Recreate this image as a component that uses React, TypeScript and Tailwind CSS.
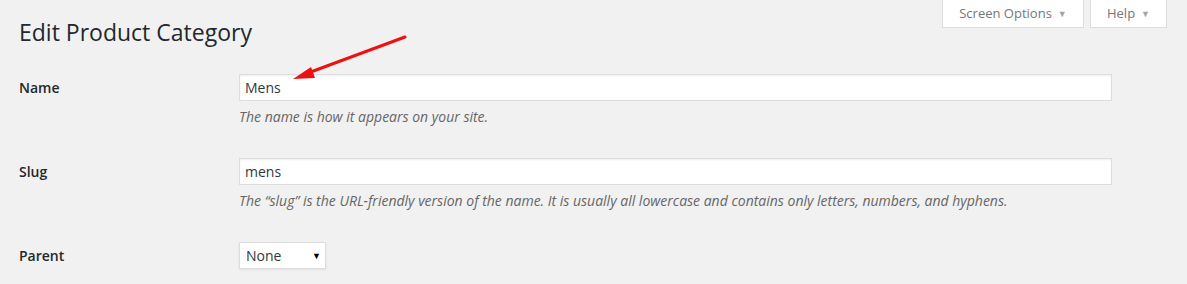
import React from "react";

const rows = [
  { label: "Name", value: "Mens", help: "The name is how it appears on your site." },
  {
    label: "Slug",
    value: "mens",
    help: "The \u201cslug\u201d is the URL-friendly version of the name. It is usually all lowercase and contains only letters, numbers, and hyphens.",
  },
];

function TabButton({ label, className }: { label: string; className: string }) {
  return (
    <button
      className={`flex h-[28px] items-center justify-center gap-[6px] border border-t-0 border-[#ddd] bg-white text-[13px] text-[#72777c] ${className}`}
    >
      {label}
      <span className="text-[9px] text-[#a0a5aa]">▼</span>
    </button>
  );
}

export default function App() {
  return (
    <div
      className="relative h-[284px] w-[1187px] overflow-hidden bg-[#f1f1f1] text-[#23282d]"
      style={{ fontFamily: '"Open Sans", "Noto Sans", sans-serif' }}
    >
      <div className="absolute right-[20px] top-0 flex gap-[6px]">
        <TabButton label="Screen Options" className="w-[142px]" />
        <TabButton label="Help" className="w-[77px]" />
      </div>

      <h1 className="pl-[19px] pt-[16px] text-[23px] leading-[32px] font-normal">Edit Product Category</h1>

      <div className="mt-[26px] flex flex-col">
        {rows.map((row) => (
          <div key={row.label} className="flex h-[84px]">
            <div className="w-[239px] pl-[19px] pt-[1px] text-[14px] leading-[26px] font-semibold">{row.label}</div>
            <div className="flex flex-col">
              <input
                readOnly
                value={row.value}
                className="h-[27px] w-[873px] border border-[#ddd] bg-white px-[5px] text-[14px] text-[#32373c] shadow-[inset_0_1px_2px_rgba(0,0,0,0.07)] outline-none"
              />
              <p className="mt-[6px] text-[14px] leading-[20px] italic text-[#666]">{row.help}</p>
            </div>
          </div>
        ))}
        <div className="flex">
          <div className="w-[239px] pl-[19px] pt-[1px] text-[14px] leading-[26px] font-semibold">Parent</div>
          <div className="flex h-[27px] w-[87px] items-center justify-between border border-[#ddd] bg-white pl-[6px] pr-[4px] text-[14px] text-[#32373c] shadow-[0_1px_2px_rgba(0,0,0,0.07)]">
            <span>None</span>
            <span className="text-[9px] text-black">▼</span>
          </div>
        </div>
      </div>

      {/* annotation arrow */}
      <svg className="absolute left-0 top-0" width="1187" height="284" viewBox="0 0 1187 284">
        <line x1="405" y1="37" x2="308" y2="73" stroke="#ee1111" strokeWidth="3" strokeLinecap="round" />
        <polygon points="293,79 311,67 315,78" fill="#ee1111" />
      </svg>
    </div>
  );
}
